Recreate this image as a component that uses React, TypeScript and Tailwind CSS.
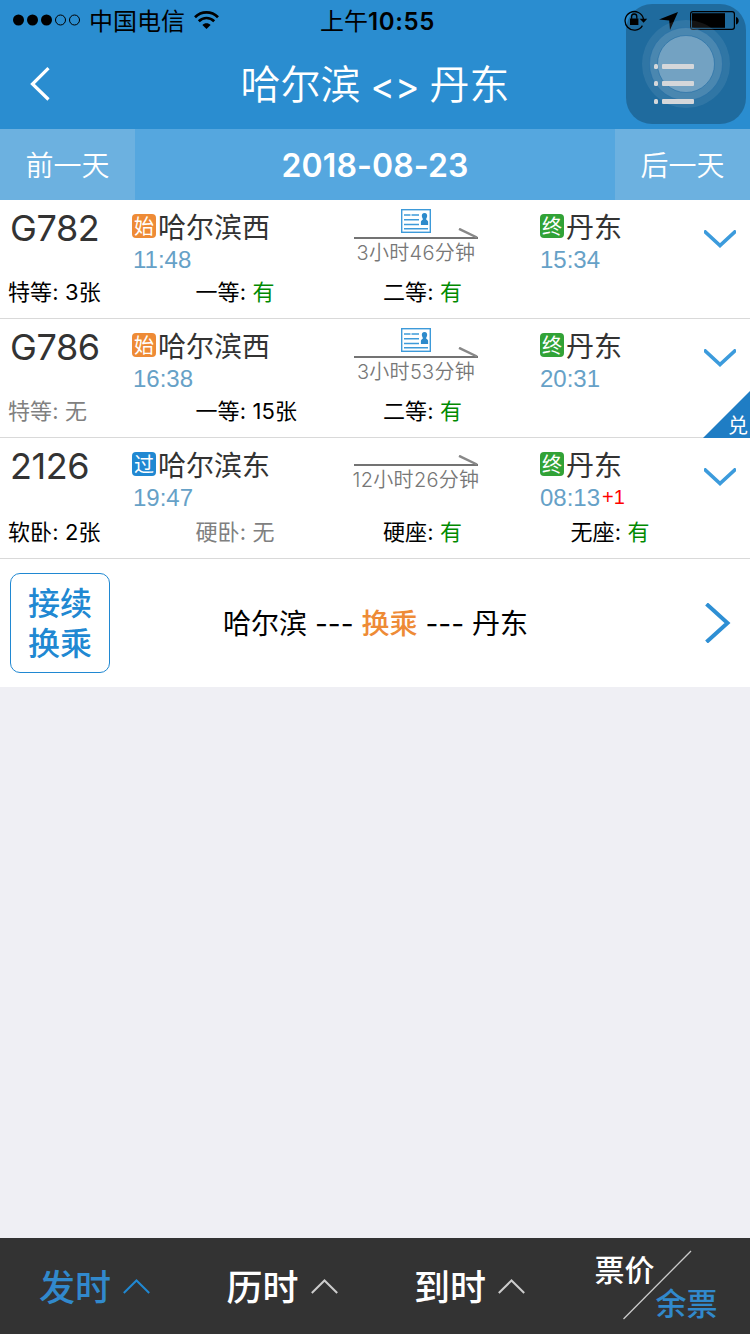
import clsx from 'clsx';

type Seat = { label: string; value: string };

type Train = {
  no: string;
  fromTag: '始' | '过';
  from: string;
  depart: string;
  duration: string;
  idCard: boolean;
  to: string;
  arrive: string;
  plusDays?: string;
  exchange?: boolean;
  seats: Seat[];
};

const trains: Train[] = [
  {
    no: 'G782',
    fromTag: '始',
    from: '哈尔滨西',
    depart: '11:48',
    duration: '3小时46分钟',
    idCard: true,
    to: '丹东',
    arrive: '15:34',
    seats: [
      { label: '特等', value: '3张' },
      { label: '一等', value: '有' },
      { label: '二等', value: '有' },
    ],
  },
  {
    no: 'G786',
    fromTag: '始',
    from: '哈尔滨西',
    depart: '16:38',
    duration: '3小时53分钟',
    idCard: true,
    to: '丹东',
    arrive: '20:31',
    exchange: true,
    seats: [
      { label: '特等', value: '无' },
      { label: '一等', value: '15张' },
      { label: '二等', value: '有' },
    ],
  },
  {
    no: '2126',
    fromTag: '过',
    from: '哈尔滨东',
    depart: '19:47',
    duration: '12小时26分钟',
    idCard: false,
    to: '丹东',
    arrive: '08:13',
    plusDays: '+1',
    seats: [
      { label: '软卧', value: '2张' },
      { label: '硬卧', value: '无' },
      { label: '硬座', value: '有' },
      { label: '无座', value: '有' },
    ],
  },
];

const sorts = [
  { label: '发时', active: true },
  { label: '历时', active: false },
  { label: '到时', active: false },
];

function StatusBar() {
  return (
    <div className="flex h-10 items-center justify-between pl-[13px] pr-[11px] text-black">
      <div className="flex w-[300px] items-center">
        <svg width="68" height="12" viewBox="0 0 68 12">
          <circle cx="5.5" cy="6" r="5.5" />
          <circle cx="19.5" cy="6" r="5.5" />
          <circle cx="33.5" cy="6" r="5.5" />
          <circle cx="47.5" cy="6" r="5" fill="none" stroke="#000" />
          <circle cx="61.5" cy="6" r="5" fill="none" stroke="#000" />
        </svg>
        <span className="ml-[8px] pt-[3px] text-[24px] leading-10">中国电信</span>
        <svg className="ml-[9px]" width="25" height="19" viewBox="0 0 25 19" fill="none" stroke="#000" strokeWidth="2.7">
          <path d="M1 6.3C7.5-.2 17.5-.2 24 6.3" />
          <path d="M4.8 10.2c4.4-4.3 11-4.3 15.4 0" />
          <path d="M8.4 14c2-2.4 6.2-2.4 8.2 0L12.5 18z" fill="#000" stroke="none" />
        </svg>
      </div>
      <span className="ml-[3px] whitespace-nowrap pt-[3px] text-[24px] leading-10">
        上午<span className="text-[24px] font-semibold tracking-[0.6px]">10:55</span>
      </span>
      <div className="flex w-[300px] items-center justify-end">
        <svg width="24" height="22" viewBox="0 0 24 22" fill="none" stroke="#000" strokeWidth="1.3">
          <path d="M18.4 16.6a9.3 9.3 0 1 1 1.1-6.6" />
          <path d="M15.6 9.8h7.6l-3.6 4z" fill="#000" stroke="none" />
          <rect x="6" y="9.5" width="8.4" height="6.5" fill="#000" stroke="none" />
          <path d="M7.6 9.8V7.6a2.6 2.6 0 0 1 5.2 0v2.2" />
        </svg>
        <svg className="ml-[11px] mt-px" width="19" height="18" viewBox="0 0 19 18">
          <path d="M19 0 11 18 10.2 8.6 0 7.6z" />
        </svg>
        <svg className="ml-[12px]" width="49" height="19" viewBox="0 0 49 19">
          <rect x=".6" y=".6" width="43.8" height="17.8" rx="2.4" fill="none" stroke="#000" strokeWidth="1.2" />
          <rect x="2" y="2.2" width="33" height="14.6" />
          <path d="M46 6c3.6.8 3.6 6.6 0 7.4z" />
        </svg>
      </div>
    </div>
  );
}

function Header() {
  return (
    <header className="relative h-[129px] bg-[#2a8dd0]">
      <StatusBar />
      <div className="flex h-[88px] items-center text-white">
        <svg className="ml-[30px]" width="20" height="34" viewBox="0 0 20 34" fill="none" stroke="#fff" strokeWidth="3.2">
          <path d="M18.5 1.2 2.5 17l16 15.5" />
        </svg>
        <h1 className="mr-[50px] flex-1 pt-[3px] text-center text-[40px] font-[350] leading-[88px]">
          哈尔滨<span className="mx-[10px] text-[37px] font-normal">&lt;&gt;</span>丹东
        </h1>
      </div>
      {/* Floating assistive button */}
      <svg className="absolute left-[626px] top-[4px]" width="120" height="120" viewBox="0 0 120 120">
        <rect width="120" height="120" rx="26" fill="#000" fillOpacity=".24" />
        <circle cx="60" cy="60" r="44" fill="#fff" fillOpacity=".08" />
        <circle cx="60" cy="60" r="36.5" fill="#fff" fillOpacity=".13" stroke="#216ca5" strokeOpacity=".5" />
        <circle cx="60" cy="60" r="28.5" fill="#fff" fillOpacity=".23" stroke="#216ca5" strokeOpacity=".6" />
        <g fill="#d5d7da">
          <rect x="28" y="60" width="4" height="5" rx="1.5" />
          <rect x="36" y="60" width="32" height="5" rx="1" />
          <rect x="28" y="77" width="4" height="5" rx="1.5" />
          <rect x="36" y="77" width="32" height="5" rx="1" />
          <rect x="28" y="95" width="4" height="5" rx="1.5" />
          <rect x="36" y="95" width="32" height="5" rx="1" />
        </g>
      </svg>
    </header>
  );
}

function DateBar() {
  return (
    <div className="flex h-[71px] bg-[#55a7df] leading-[71px] text-white">
      <button className="w-[135px] bg-[#6cb1e0] pt-[2px] text-[28px] font-[350]">前一天</button>
      <div className="flex-1 pt-px text-center text-[32px] font-semibold tracking-[0.1px]">2018-08-23</div>
      <button className="w-[135px] bg-[#6cb1e0] pt-[2px] text-[28px] font-[350]">后一天</button>
    </div>
  );
}

function IdCard() {
  return (
    <svg width="30" height="24" viewBox="0 0 30 24" fill="none" stroke="#3d9ad9" strokeWidth="1.4">
      <rect x=".7" y=".7" width="28.6" height="22.6" />
      <path d="M3 6h6.5M10.5 6H18M3 10.7h15M3 15.5h15M3 19.8h24" />
      <path d="M23.5 4c2 0 3 1.500 2.600 3.600-.2 1.200-.8 1.800-1 2.600 0 1 2 1 2 2.600V16h-7.200v-3.200c0-1.600 2-1.600 2-2.600-.2-.8-.8-1.400-1-2.600C20.500 5.500 21.500 4 23.500 4z" fill="#2d8acb" stroke="none" />
    </svg>
  );
}

function Station({ tag, name }: { tag: string; name: string }) {
  return (
    <div className="flex h-[34px] items-center">
      <span
        className={clsx(
          'h-6 w-6 rounded-[4px] text-center text-[20px] leading-[26px] text-white',
          tag === '始' && 'bg-[#ee8b36]',
          tag === '过' && 'bg-[#2088d2]',
          tag === '终' && 'bg-[#31a236]',
        )}
      >
        {tag}
      </span>
      <span className="ml-[2px] pt-[3px] text-[28px] leading-[34px] text-[#333]">{name}</span>
    </div>
  );
}

function TrainRow({ train }: { train: Train }) {
  return (
    <li
      className={clsx(
        'relative border-b border-[#d9d9d9] bg-white pt-[9px]',
        train.seats.length > 3 ? 'h-[121px]' : 'h-[119px]',
      )}
    >
      <div className="flex h-[67px]">
        <div className="w-[132px] pl-[10px] text-[36px] leading-[38px] tracking-[-0.4px] text-[#333]">{train.no}</div>
        <div className="w-[202px]">
          <Station tag={train.fromTag} name={train.from} />
          <div className="pl-px font-['Liberation_Sans'] text-[24px] leading-[34px] text-[#66a1c7]">{train.depart}</div>
        </div>
        <div className="flex w-[164px] flex-col items-center">
          {train.idCard && <IdCard />}
          <svg
            className={train.idCard ? '-mt-[5px]' : 'mt-[8px]'}
            width="124"
            height="12"
            viewBox="0 0 124 12"
            fill="none"
          >
            <path d="M0 10h124" stroke="#444" strokeWidth="1.6" />
            <path d="M105 .8 123 9.5" stroke="#888" strokeWidth="2.4" />
          </svg>
          <div className="whitespace-nowrap text-[20px] font-[350] leading-[26px] tracking-[0.3px] text-[#777]">
            {train.duration}
          </div>
        </div>
        <div className="w-[206px] pl-[42px]">
          <Station tag="终" name={train.to} />
          <div className="font-['Liberation_Sans'] text-[24px] leading-[34px] text-[#66a1c7]">
            {train.arrive}
            {train.plusDays && <span className="relative -top-[2px] ml-[2px] text-[20px] text-[#f00]">{train.plusDays}</span>}
          </div>
        </div>
        <svg className="mt-[21px]" width="32" height="18" viewBox="0 0 32 18" fill="none" stroke="#3c9bdc" strokeWidth="3.6">
          <path d="M0 .8 16 15.500 32 .8" />
        </svg>
      </div>
      <div className={clsx('flex pl-[8px] text-[22px] leading-[33px]', train.seats.length > 3 && 'pt-[2px]')}>
        {train.seats.map(s => (
          <div
            key={s.label}
            className={clsx('w-[187.5px] shrink-0 whitespace-nowrap tracking-[0.1px]', s.value === '无' ? 'text-[#808080]' : 'text-black')}
          >
            {s.label}: <span className={s.value === '有' ? 'text-[#008a00]' : ''}>{s.value}</span>
          </div>
        ))}
      </div>
      {train.exchange && (
        <div className="absolute -bottom-px right-0 h-[47px] w-[47px] bg-[#1f7dc4] pl-[25px] pt-[23px] text-[20px] leading-6 text-white [clip-path:polygon(100%_0,100%_100%,0_100%)]">
          兑
        </div>
      )}
    </li>
  );
}

function TransferRow() {
  return (
    <div className="flex h-[128px] items-center bg-white pl-[10px] pr-[19px]">
      <div className="flex h-[100px] w-[100px] flex-col items-center justify-center rounded-[10px] border border-[#2088d2] pt-[2px] text-[32px] font-medium leading-[40px] text-[#2088d2]">
        <span>接续</span>
        <span>换乘</span>
      </div>
      <div className="flex-1 pr-[64px] pt-[2px] text-center text-[28px] leading-[40px] text-black">
        哈尔滨 --- <span className="font-medium text-[#ee8b36]">换乘</span> --- 丹东
      </div>
      <svg width="26" height="40" viewBox="0 0 26 40" fill="none" stroke="#2e8fd4" strokeWidth="4">
        <path d="M1.5 1 22.5 20 1.5 39" />
      </svg>
    </div>
  );
}

function BottomBar() {
  return (
    <footer className="flex h-[96px] bg-[#333] text-white">
      {sorts.map(s => (
        <div key={s.label} className={clsx('flex w-[187.5px] items-center pl-[39px]', s.active && 'text-[#3189cc]')}>
          <span className="pt-[4px] text-[36px] font-medium leading-[92px]">{s.label}</span>
          <svg className="ml-[12px]" width="27" height="15" viewBox="0 0 27 15" fill="none" stroke={s.active ? '#2088d2' : '#ccc'} strokeWidth="2">
            <path d="M.8 14 13.5 1.5 26.2 14" />
          </svg>
        </div>
      ))}
      <div className="relative flex-1 text-[30px] font-medium leading-[34px]">
        <div className="pl-[32px] pt-[15px]">票价</div>
        <div className="pl-[93px] text-[31px] text-[#3189cc]">余票</div>
        <svg className="absolute left-[60px] top-[12px]" width="69" height="70" viewBox="0 0 69 70">
          <path d="M.5 69 68 1" stroke="#ccc" strokeWidth="1.3" />
        </svg>
      </div>
    </footer>
  );
}

export default function App() {
  return (
    <div className="flex h-[1334px] w-[750px] flex-col overflow-hidden bg-[#efeff4] font-['Inter','Noto_Sans_CJK_SC',sans-serif]">
      <Header />
      <DateBar />
      <ul>
        {trains.map(t => (
          <TrainRow key={t.no} train={t} />
        ))}
      </ul>
      <TransferRow />
      <div className="flex-1" />
      <BottomBar />
    </div>
  );
}
